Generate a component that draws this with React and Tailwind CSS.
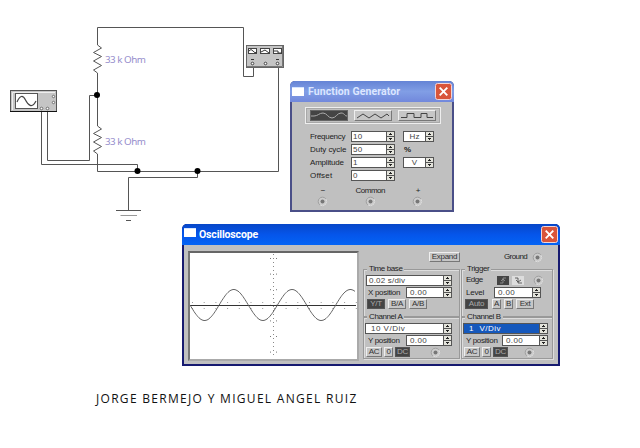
import React from 'react';

const raised = 'border border-t-[#efefef] border-l-[#efefef] border-r-[#777] border-b-[#777] bg-[#c6c6c6] text-[#333]';
const pressed = 'border border-[#555] bg-[#444] text-[#aaa]';

function Txt({ children, className = '' }) {
  return <span className={`block whitespace-pre text-[8px] leading-[10px] ${className}`}>{children}</span>;
}

function Spinner() {
  return (
    <svg className="block h-[11px] w-[9px] shrink-0" viewBox="0 0 9 11" shapeRendering="crispEdges">
      <rect width="9" height="11" fill="#555" />
      <rect x="1" y="1" width="7" height="4" fill="#e4e4dc" />
      <rect x="1" y="6" width="7" height="4" fill="#e4e4dc" />
      <path d="M4 2h1v1h1v1H3V3h1zM3 7h3v1H5v1H4V8H3z" fill="#222" />
    </svg>
  );
}

function Field({ value, className, selected = false, text = 'pl-px tracking-[0.3px]' }) {
  return (
    <div className={`flex h-[11px] shrink-0 ${className}`}>
      <div className={`min-w-0 flex-1 overflow-hidden border border-r-0 border-[#555] ${selected ? 'bg-[#1558bc] text-white' : 'bg-white text-[#444]'}`}>
        <Txt className={`leading-[9px] ${text}`}>{value}</Txt>
      </div>
      <Spinner />
    </div>
  );
}

function Radio({ className = '' }) {
  return (
    <svg className={`block h-[11px] w-[11px] shrink-0 ${className}`} viewBox="0 0 11 11">
      <circle cx="5.5" cy="5.5" r="4.3" fill="#cdcdcd" stroke="#9a9a9a" strokeWidth=".9" />
      <path d="M9 3a4.3 4.3 0 0 1-6 6" fill="none" stroke="#eee" strokeWidth=".8" />
      <circle cx="5.5" cy="5.5" r="2" fill="#777" />
    </svg>
  );
}

function Btn({ children, className, on = false }) {
  return (
    <div className={`flex h-[10px] shrink-0 items-center justify-center ${on ? pressed : raised} ${className}`}>
      <Txt className="leading-[8px] tracking-[-0.3px]">{children}</Txt>
    </div>
  );
}

function Close() {
  return (
    <svg className="block h-[17px] w-[17px]" viewBox="0 0 17 17">
      <rect x=".5" y=".5" width="16" height="16" rx="2" fill="#d9553b" stroke="#f3d5d5" />
      <path d="M4.7 4.7l7.6 7.6M12.3 4.7l-7.6 7.6" stroke="#fff" strokeWidth="1.9" />
    </svg>
  );
}

function WindowIcon({ className = '' }) {
  return <div className={`h-[9px] w-3 shrink-0 border-t border-[#d5e4ff] bg-white ${className}`} />;
}

function Circuit() {
  return (
    <svg className="absolute left-0 top-0 h-[448px] w-[640px]" viewBox="0 0 640 448" fill="none">
      <g stroke="#555" strokeWidth="1">
        <path d="M97.5 45V27.5H243.5V76.5H253.5V66" />
        <path d="M97.5 73V126M97.5 154V171.5H278.5V66" />
        <path d="M97.5 45l4 3-8 4.5 8 4-8 4.500 8 4.500-8 4.500 4 3M97.500 126l4 3-8 4.500 8 4-8 4.500 8 4.500-8 4.500 4 3" />
        <path d="M97 95.500H89.500V160.500H47.500V110M41.500 110V164.500H137.500V171" />
        <path d="M197.500 171V177.500H128.500V210" />
        <path d="M116 210.500H141M126 220.500H131" />
        <path d="M120.500 215.500H137" stroke="#999" />
      </g>
      <g fill="#000">
        <circle cx="97" cy="95" r="3" />
        <circle cx="137.500" cy="171" r="3" />
        <circle cx="197.500" cy="171" r="3" />
      </g>
      <g fill="#968dcc" fontFamily="Noto Sans, sans-serif" fontSize="9.800">
        <text x="105" y="63" textLength="41">33 k Ohm</text>
        <text x="105" y="145" textLength="41">33 k Ohm</text>
      </g>
      <g>
        <rect x="10.500" y="90.500" width="46" height="21" fill="#c5c5c5" stroke="#555" />
        <path d="M10 111.500H57" stroke="#111" />
        <path d="M12.500 110V92.500H55" stroke="#eee" />
        <rect x="15.500" y="93.500" width="22" height="15" fill="#fff" stroke="#555" />
        <path d="M17 102C20 95 23 95 25.500 100S32 109 36 101" stroke="#444" strokeWidth="1.200" />
        <g fill="#fff" stroke="#555" strokeWidth=".8">
          <circle cx="53.500" cy="96.500" r="1.200" />
          <circle cx="53.500" cy="102.500" r="1.200" />
          <circle cx="41.500" cy="108.500" r="1.300" />
          <circle cx="47.500" cy="108.500" r="1.300" />
        </g>
      </g>
      <g>
        <rect x="246.500" y="45.500" width="37" height="22" fill="#c5c5c5" stroke="#666" />
        <path d="M247 66.500H282.500V46" stroke="#777" />
        <g fill="#fff" stroke="#444">
          <rect x="248.500" y="48.500" width="8" height="5" />
          <rect x="260.500" y="48.500" width="9" height="5" />
          <rect x="273.500" y="48.500" width="8" height="5" />
        </g>
        <path d="M249 51q2-3 4 0t4 1M261 52l4-2 4 3M274 51h4v2h4M251 59.500h3M276 59.500h3" stroke="#333" />
        <g fill="#fff" stroke="#333" strokeWidth=".9">
          <circle cx="252.500" cy="63.500" r="1.300" />
          <circle cx="265.500" cy="63.500" r="1.300" />
          <circle cx="277.500" cy="63.500" r="1.300" />
        </g>
      </g>
    </svg>
  );
}

function WaveButton({ d, on }) {
  return (
    <div className={`h-[11px] w-[38px] ${on ? 'border border-[#666] bg-[#444]' : raised}`}>
      <svg className="block h-[9px] w-9" viewBox="0 0 36 9" fill="none">
        <path d={d} stroke={on ? '#aaa' : '#444'} />
      </svg>
    </div>
  );
}

function ParamRow({ label, value, unit, tracking }) {
  return (
    <div className="flex h-[13px] items-center">
      <Txt className={`w-[41px] ${tracking}`}>{label}</Txt>
      <Field value={value} className="w-11" />
      {unit === '%' && <Txt className="ml-[9px] text-[7px] font-bold">%</Txt>}
      {unit && unit !== '%' && <Field value={unit} className="ml-2 w-[31px]" text="text-center" />}
    </div>
  );
}

function Terminal({ label }) {
  return (
    <div className="flex w-[47.500px] flex-col items-center">
      <Txt className="tracking-[-0.5px]">{label}</Txt>
      <Radio />
    </div>
  );
}

function FunctionGenerator() {
  return (
    <section className="absolute left-[290px] top-[81px] flex h-[131px] w-[164px] flex-col rounded-t-[5px] border-x-2 border-b-2 border-[#4a4f88] bg-[#4a4f88]">
      <header className="-mx-[2px] flex h-[21px] shrink-0 items-center rounded-t-[5px] bg-linear-to-b from-[#6584d5] via-[#819ee5] to-[#7188dc] pl-[2px] pr-[2px]">
        <WindowIcon />
        <span className="ml-[4px] flex-1 whitespace-nowrap font-['Roboto'] text-[10.500px] font-bold leading-[16px] tracking-[0.1px] text-[#dce6ff]">Function Generator</span>
        <Close />
      </header>
      <div className="flex flex-1 flex-col bg-[#c0c0c0]">
        <div className="ml-[13px] mt-[5px] flex h-[17px] w-[136px] items-center justify-between border border-[#eee] px-1 outline-1 -outline-offset-2 outline-[#a8a8a8]">
          <WaveButton on d="M0 5h3C7 5 8 2 12 2s5 5 9 5 5-5 9-5 3 3 6 3" />
          <WaveButton d="M2 7l6-4 6 4 6-4 6 4 6-4 2 2" />
          <WaveButton d="M2 6.500h6v-4h7v4h7v-4h6v4h6" />
        </div>
        <div className="ml-[18px] mt-[6px] flex flex-col">
          <ParamRow label="Frequency" value="10" unit="Hz" tracking="tracking-[-0.3px]" />
          <ParamRow label="Duty cycle" value="50" unit="%" tracking="tracking-[-0.05px]" />
          <ParamRow label="Amplitude" value="1" unit="V" tracking="tracking-[-0.2px]" />
          <ParamRow label="Offset" value="0" tracking="tracking-[0.2px]" />
        </div>
        <div className="ml-[7px] mt-[4px] flex">
          <Terminal label="−" />
          <Terminal label="Common" />
          <Terminal label="+" />
        </div>
      </div>
    </section>
  );
}

const traceY = (x) => 52 + 15.5 * Math.sin((2 * Math.PI * x) / 58.3);
const trace = Array.from({ length: 166 }, (_, x) => `${x ? 'L' : 'M'}${x} ${traceY(x).toFixed(1)}`).join('');

function Screen() {
  return (
    <div className="h-[110px] w-[171px] shrink-0 border-2 border-b-[#aaa] border-l-[#777] border-r-[#aaa] border-t-[#666] bg-white">
      <svg className="block h-[106px] w-[167px]" viewBox="0 0 167 106" fill="none">
        <path d="M83.500 1V105" stroke="#888" strokeDasharray="1 3" />
        <path d="M80.500 5V104M86.500 5V104" stroke="#777" strokeDasharray="1 14.600" />
        <path d="M2 49.500H167M2 55.500H167" stroke="#999" strokeDasharray="1 10.700" />
        <path d="M0 52.500H166" stroke="#333" />
        <path d={trace} stroke="#555" strokeWidth=".9" />
      </svg>
    </div>
  );
}

function Group({ title, className, children }) {
  return (
    <div className={`flex flex-col border border-[#999] shadow-[inset_1px_1px_0_#ddd,1px_1px_0_#ddd] ${className}`}>
      <div className="-mt-[6px] flex h-[11px] shrink-0 pl-[3px]">
        <Txt className="bg-[#c0c0c0] px-[2px] tracking-[-0.4px]">{title}</Txt>
      </div>
      {children}
    </div>
  );
}

function Channel({ title, value, selected, className, fieldWidth, labelWidth }) {
  return (
    <Group title={title} className={`h-[42px] ${className}`}>
      <Field value={value} selected={selected} className={`ml-px ${fieldWidth}`} text="pl-[5px] tracking-[0.5px]" />
      <div className="mt-px flex h-[11px] items-center pl-[4px]">
        <Txt className={`${labelWidth} tracking-[-0.35px]`}>Y position</Txt>
        <Field value="0.00" className="w-[46px]" text="pl-[3px] tracking-[0.4px]" />
      </div>
      <div className="mt-px flex pl-[2px]">
        <Btn className="w-4">AC</Btn>
        <Btn className="ml-[2px] w-[9px]">0</Btn>
        <Btn on className="ml-[2px] w-[15px]">DC</Btn>
        <Radio className={selected ? 'ml-[16px]' : 'ml-[20px]'} />
      </div>
    </Group>
  );
}

function Controls() {
  return (
    <div className="ml-[4px] flex flex-1 flex-col">
      <div className="mt-[1px] flex h-[10px] items-center">
        <Btn className="ml-[66px] w-[31px]">Expand</Btn>
        <Txt className="ml-[44px] w-[28px] tracking-[-0.6px]">Ground</Txt>
        <Radio />
      </div>
      <div className="mt-[7px] flex">
        <div className="w-[98px]">
          <Group title="Time base" className="h-[48px] w-[97px]">
            <Field value="0.02 s/div" className="ml-[2px] w-[86px]" text="pl-[2px] tracking-[0.2px]" />
            <div className="mt-px flex h-[11px] items-center pl-[4px]">
              <Txt className="w-[38px] tracking-[-0.3px]">X position</Txt>
              <Field value="0.00" className="w-[46px]" text="pl-[3px] tracking-[0.4px]" />
            </div>
            <div className="mt-px flex gap-[3px] pl-[3px]">
              <Btn on className="w-[18px]">Y/T</Btn>
              <Btn className="w-[18px]">B/A</Btn>
              <Btn className="w-[18px]">A/B</Btn>
            </div>
          </Group>
          <Channel title="Channel A" value="10 V/Div" className="w-[97px]" fieldWidth="w-[87px]" labelWidth="w-[38px]" />
        </div>
        <div className="w-[92px]">
          <Group title="Trigger" className="h-[48px] w-[92px]">
            <div className="flex h-[10px] items-center pl-[4px]">
              <Txt className="w-[31px] tracking-[-0.5px]">Edge</Txt>
              <svg className="block h-[9px] w-7" viewBox="0 0 28 9" fill="none">
                <path d="M0 0h12v9H0z" fill="#444" />
                <path d="M15 0h12v9H15z" fill="#ddd" />
                <path d="M3 7h3V2h3M4 5l2-2 2 2" stroke="#999" strokeWidth=".8" />
                <path d="M18 2h3v5h4M19 4l2 2 3-2" stroke="#444" strokeWidth=".8" />
              </svg>
              <Radio className="ml-[8px]" />
            </div>
            <div className="mt-[2px] flex h-[11px] items-center pl-[4px]">
              <Txt className="w-[28px] tracking-[-0.2px]">Level</Txt>
              <Field value="0.00" className="w-[47px]" text="pl-[3px] tracking-[0.4px]" />
            </div>
            <div className="mt-px flex gap-[3px] pl-[3px]">
              <Btn on className="mr-px w-[23px]">Auto</Btn>
              <Btn className="w-[9px]">A</Btn>
              <Btn className="w-[9px]">B</Btn>
              <Btn className="w-[18px]">Ext</Btn>
            </div>
          </Group>
          <Channel title="Channel B" value="1  V/Div" selected className="w-[92px]" fieldWidth="w-[85px]" labelWidth="w-[36px]" />
        </div>
      </div>
    </div>
  );
}

function Oscilloscope() {
  return (
    <section className="absolute left-[182px] top-[224px] flex h-[142px] w-[378px] flex-col rounded-t-[5px] border-x-2 border-b-2 border-[#161a70] bg-[#161a70]">
      <header className="-mx-[2px] flex h-[21px] shrink-0 items-center rounded-t-[5px] bg-linear-to-b from-[#0747c8] via-[#0555ea] to-[#0464f5] pl-[2px] pr-[2px]">
        <WindowIcon className="-mt-1" />
        <span className="ml-[3px] flex-1 whitespace-nowrap font-['Roboto'] text-[10.500px] font-bold leading-[16px] tracking-[-0.15px] text-white">Oscilloscope</span>
        <Close />
      </header>
      <div className="flex flex-1 bg-[#c0c0c0] pl-[4px] pt-[6px]">
        <Screen />
        <Controls />
      </div>
    </section>
  );
}

export default function App() {
  return (
    <main className="relative h-[448px] w-[640px] overflow-hidden bg-white font-['Liberation_Sans',sans-serif] text-[#222]">
      <Circuit />
      <FunctionGenerator />
      <Oscilloscope />
      <p className="absolute left-[96px] top-[390px] whitespace-nowrap font-['Comic_Sans_MS','Open_Sans',sans-serif] text-[12px] font-medium leading-[18px] tracking-[1.3px] text-[#111]">JORGE BERMEJO Y MIGUEL ANGEL RUIZ</p>
    </main>
  );
}
